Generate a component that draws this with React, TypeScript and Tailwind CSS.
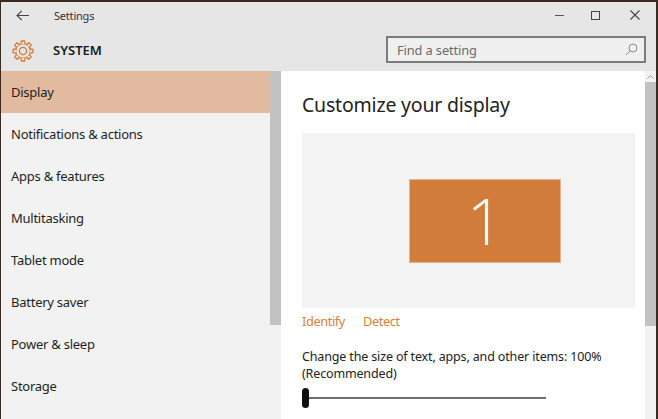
import React from "react";

const items = ["Display", "Notifications & actions", "Apps & features", "Multitasking", "Tablet mode", "Battery saver", "Power & sleep", "Storage"];

function Gear() {
  const teeth = [0, 45, 90, 135, 180, 225, 270, 315];
  return (
    <svg width="22" height="22" viewBox="0 0 22 22" fill="none" stroke="#d27c3c" strokeWidth="1.3">
      <circle cx="11" cy="11" r="3.6" />
      <circle cx="11" cy="11" r="7.4" />
      {teeth.map((a) => (
        <path key={a} d="M9 3.8 L9.3 1 H12.7 L13 3.8" fill="#e6e6e6" strokeLinejoin="round" transform={`rotate(${a} 11 11)`} />
      ))}
    </svg>
  );
}

export default function App() {
  return (
    <div className="w-[658px] h-[419px] overflow-hidden flex flex-col bg-[#3a2a20] pt-[2px] pl-px pr-[2px] font-['Noto_Sans',sans-serif] text-[#1f1f1f]">
      <div className="bg-[#e6e6e6] h-[69px] shrink-0 flex flex-col">
        <div className="h-[26px] flex items-center">
          <svg className="ml-[15px]" width="13" height="11" viewBox="0 0 13 11" fill="none" stroke="#444" strokeWidth="1.1">
            <path d="M13 5.5H1M5.8 .8 1 5.5l4.8 4.7" />
          </svg>
          <span className="ml-[25px] text-[11px] tracking-[-0.2px] pt-[2px] text-[#333]">Settings</span>
          <div className="ml-auto flex items-center">
            <div className="w-[9px] h-px bg-[#555] mr-[27px]" />
            <div className="w-[9px] h-[9px] border border-[#444] mr-[30px]" />
            <svg className="mr-[16px]" width="10" height="10" viewBox="0 0 10 10" stroke="#444" strokeWidth="1.1">
              <path d="M.5.5l9 9M9.5.5l-9 9" />
            </svg>
          </div>
        </div>
        <div className="flex items-center mt-[8px]">
          <div className="ml-[11px] mt-[2px]"><Gear /></div>
          <span className="ml-[19px] pt-[2px] text-[13px] font-semibold text-[#1a1a1a]">SYSTEM</span>
          <div className="ml-auto mr-[10px] w-[260px] h-[27px] border-2 border-[#7b7b7b] bg-[#f0f0f0] flex items-center pl-[9px] pr-[6px]">
            <span className="text-[12.8px] tracking-[-0.1px] pt-[2px] text-[#6a6a6a]">Find a setting</span>
            <svg className="ml-auto" width="13" height="13" viewBox="0 0 13 13" fill="none" stroke="#8a8a8a" strokeWidth="1">
              <circle cx="8" cy="5" r="4" />
              <path d="M5 8 1 12" />
            </svg>
          </div>
        </div>
      </div>
      <div className="flex-1 flex min-h-0">
        <div className="w-[269px] shrink-0 bg-[#f2f2f2]">
          {items.map((t, i) => (
            <div key={t} className={`h-[42px] flex items-center pl-[10px] pt-[2px] text-[13px] tracking-[-0.25px] ${i === 0 ? "bg-[#e2baa0]" : ""}`}>{t}</div>
          ))}
        </div>
        <div className="w-[11px] shrink-0 bg-[#f2f2f2]">
          <div className="h-[254px] bg-[#c2c2c2]" />
        </div>
        <div className="flex-1 flex min-w-0 bg-white">
          <div className="flex-1 min-w-0 pl-[21px] pr-[10px]">
            <div className="text-[19.5px] tracking-[-0.2px] leading-[28px] mt-[20px] text-[#222]">Customize your display</div>
            <div className="h-[175px] mt-[14px] bg-[#f3f3f3] flex items-center pl-[107px]">
              <div className="w-[152px] h-[84px] bg-[#d27c3c] border border-[#e4b48f] flex items-center justify-center text-white text-[64px] font-['Open_Sans',sans-serif] font-light leading-none">1</div>
            </div>
            <div className="flex gap-[18px] mt-[1px] text-[12.8px] tracking-[-0.4px] leading-[24px] text-[#dc7f3e]">
              <span>Identify</span>
              <span>Detect</span>
            </div>
            <div className="mt-[15px] text-[12.5px] tracking-[-0.15px] leading-[17px] text-[#222]">
              Change the size of text, apps, and other items: 100%<br />(Recommended)
            </div>
            <div className="relative h-[20px] mt-[6px] w-[244px] flex items-center">
              <div className="h-[2px] w-full bg-[#6e6e6e]" />
              <div className="absolute left-0 top-0 w-[7px] h-[20px] rounded-full bg-[#111]" />
            </div>
          </div>
          <div className="w-[11px] shrink-0 bg-[#f2f2f2] flex flex-col">
            <div className="h-[11px] flex items-center justify-center">
              <svg width="7" height="4" viewBox="0 0 7 4" fill="none" stroke="#999"><path d="M.5 3.5l3-3 3 3" /></svg>
            </div>
            <div className="h-[244px] bg-[#c2c2c2]" />
          </div>
        </div>
      </div>
    </div>
  );
}
